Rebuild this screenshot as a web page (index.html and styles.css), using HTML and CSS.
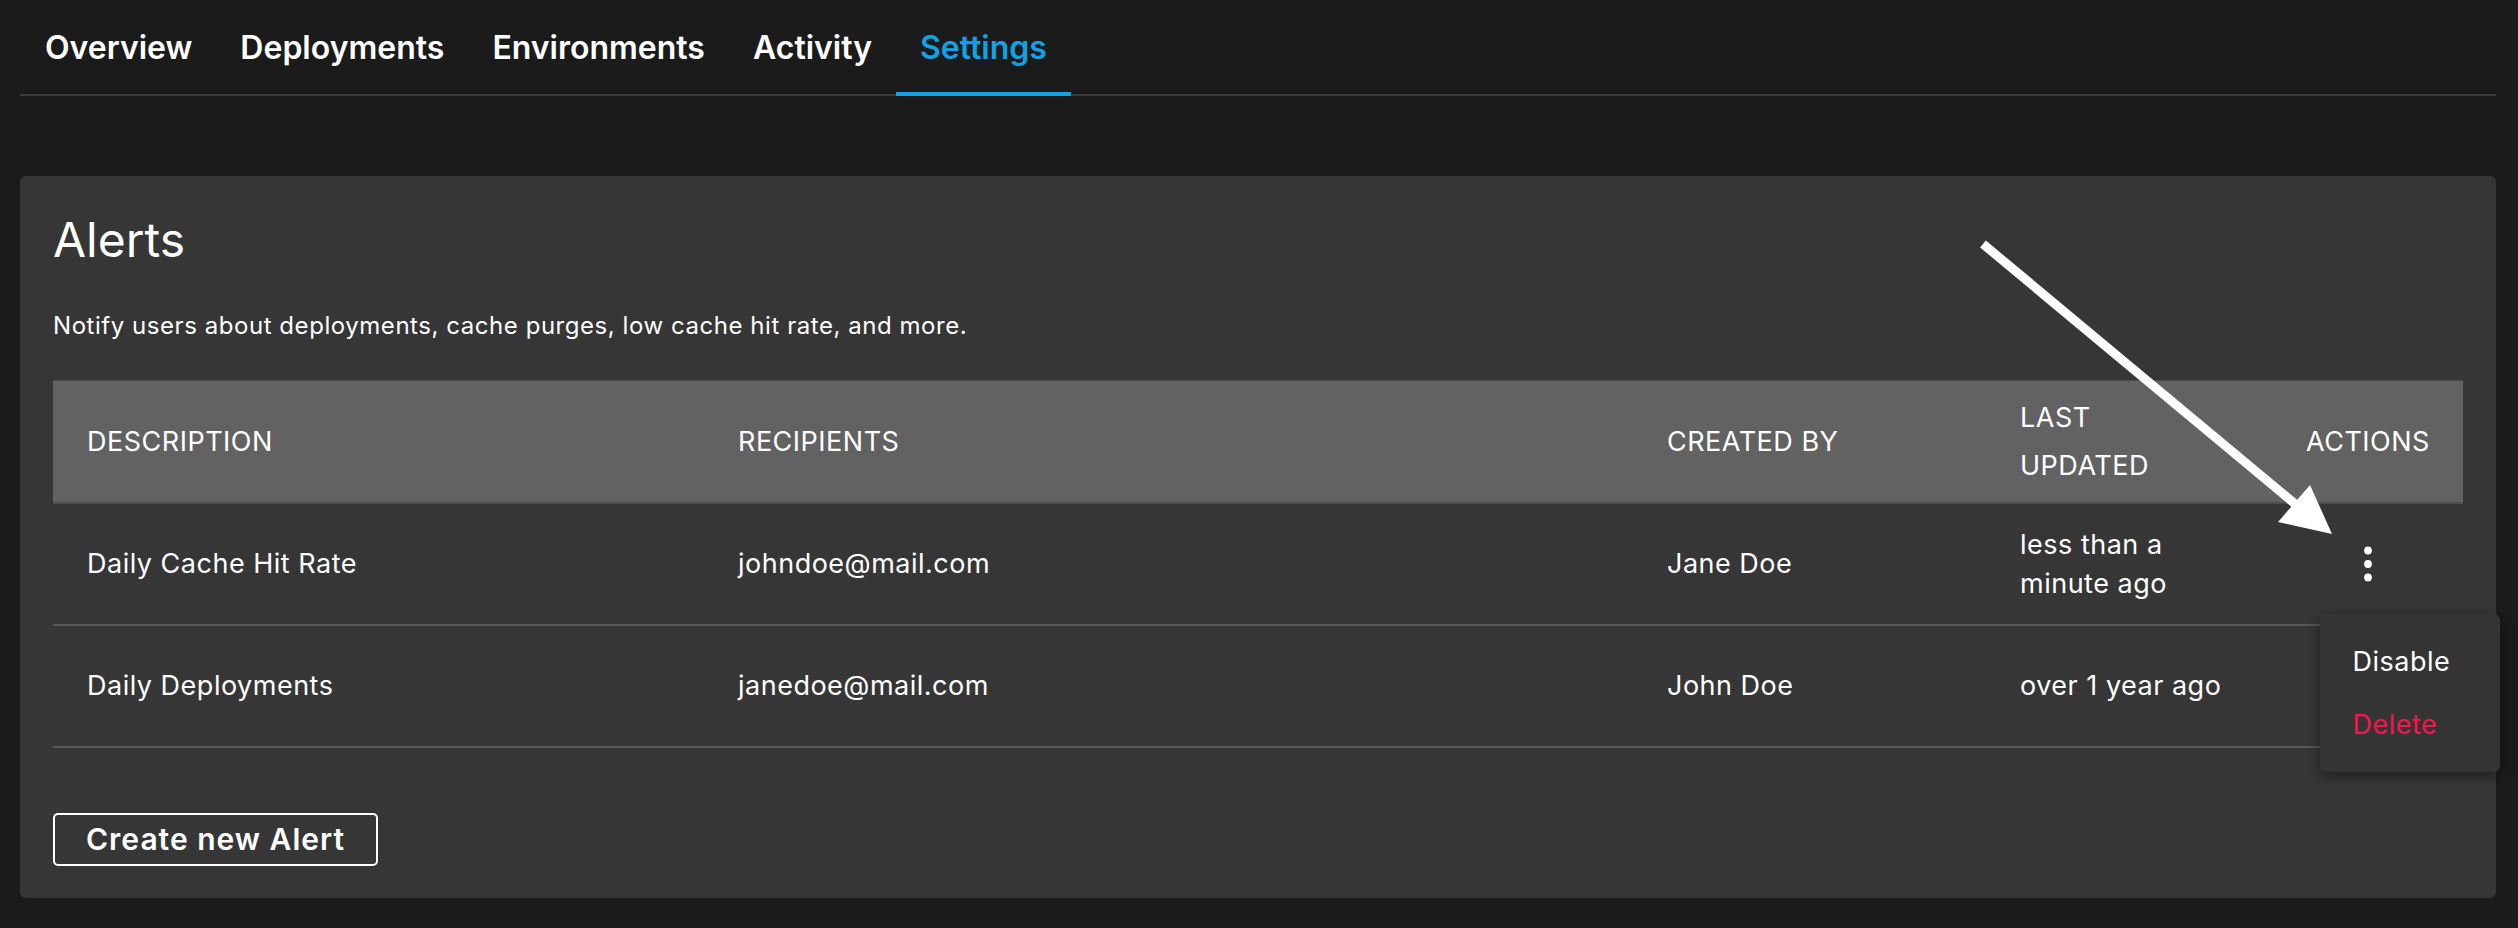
FILE: index.html
```html
<!DOCTYPE html>
<html lang="en">
<head>
<meta charset="utf-8">
<title>Settings - Alerts</title>
<link rel="stylesheet" href="styles.css">
</head>
<body>
<div class="page">
  <nav class="tabs">
    <a class="tab">Overview</a>
    <a class="tab">Deployments</a>
    <a class="tab">Environments</a>
    <a class="tab">Activity</a>
    <a class="tab active">Settings</a>
  </nav>

  <section class="card">
    <h2 class="card-title">Alerts</h2>
    <p class="card-sub">Notify users about deployments, cache purges, low cache hit rate, and more.</p>

    <table class="alerts">
      <colgroup>
        <col class="c-desc">
        <col class="c-rec">
        <col class="c-by">
        <col class="c-upd">
        <col class="c-act">
      </colgroup>
      <thead>
        <tr>
          <th>DESCRIPTION</th>
          <th>RECIPIENTS</th>
          <th>CREATED BY</th>
          <th>LAST<br>UPDATED</th>
          <th class="center">ACTIONS</th>
        </tr>
      </thead>
      <tbody>
        <tr>
          <td>Daily Cache Hit Rate</td>
          <td>johndoe@mail.com</td>
          <td>Jane Doe</td>
          <td>less than a minute ago</td>
          <td class="center">
            <span class="kebab-wrap">
              <button class="kebab" aria-label="Actions">
                <svg width="40" height="40" viewBox="0 0 40 40"><circle cx="20" cy="6.5" r="3.9" fill="#fff"/><circle cx="20" cy="20" r="3.9" fill="#fff"/><circle cx="20" cy="33.5" r="3.9" fill="#fff"/></svg>
              </button>
              <div class="menu">
                <div class="menu-item">Disable</div>
                <div class="menu-item danger">Delete</div>
              </div>
            </span>
          </td>
        </tr>
        <tr>
          <td>Daily Deployments</td>
          <td>janedoe@mail.com</td>
          <td>John Doe</td>
          <td>over 1 year ago</td>
          <td class="center">
            <button class="kebab" aria-label="Actions">
              <svg width="40" height="40" viewBox="0 0 40 40"><circle cx="20" cy="6.5" r="3.9" fill="#fff"/><circle cx="20" cy="20" r="3.9" fill="#fff"/><circle cx="20" cy="33.5" r="3.9" fill="#fff"/></svg>
            </button>
          </td>
        </tr>
      </tbody>
    </table>

    <button class="btn-outline">Create new Alert</button>
  </section>
</div>

<svg class="annot" width="2518" height="928" viewBox="0 0 2518 928">
  <line x1="1983" y1="244" x2="2300" y2="508" stroke="#fff" stroke-width="9"/>
  <polygon points="2332,534 2278,522 2310,485" fill="#fff"/>
</svg>
</body>
</html>
```

FILE: styles.css
```css
* { box-sizing: border-box; }

html, body {
  margin: 0;
  background: #1b1b1b;
  color: #fff;
  font-family: Inter, "Noto Sans", sans-serif;
}

.page {
  padding: 0 22px 0 20px;
}

.tabs {
  display: flex;
  padding-left: 1px;
  border-bottom: 2px solid #3a3a3a;
}

.tab {
  display: block;
  padding: 24px 24px 20px;
  margin-bottom: -2px;
  font-size: 32px;
  line-height: 48px;
  font-weight: 600;
  color: #fff;
  border-bottom: 4px solid transparent;
}

.tab.active {
  color: #12a1e1;
  border-bottom-color: #12a1e1;
}

.card {
  margin-top: 80px;
  background: #363636;
  border-radius: 6px;
  padding: 35px 33px 32px;
}

.card-title {
  margin: 0;
  font-size: 48px;
  line-height: 58px;
  font-weight: 400;
}

.card-sub {
  margin: 40px 0 38px;
  font-size: 24px;
  line-height: 33px;
  letter-spacing: 0.55px;
}

.alerts {
  width: 100%;
  border-collapse: collapse;
  table-layout: fixed;
}

.c-desc { width: 651px; }
.c-rec { width: 929px; }
.c-by { width: 353px; }
.c-upd { width: 286px; }
.c-act { width: 191px; }

.alerts th {
  background: #626262;
  text-align: left;
  font-weight: 400;
  font-size: 27px;
  letter-spacing: 0.5px;
  line-height: 48px;
  padding: 12.5px 34px 12px;
  vertical-align: middle;
  border-top: 1px solid #4c4c4c;
  border-bottom: 2px solid #4e4e4e;
}

.alerts td {
  font-size: 27px;
  letter-spacing: 0.5px;
  line-height: 39px;
  padding: 0 34px;
  height: 122px;
  vertical-align: middle;
  border-bottom: 2px solid #575757;
}

.alerts .center { text-align: center; }

.kebab-wrap {
  position: relative;
  display: inline-block;
  vertical-align: middle;
}

.kebab {
  display: block;
  width: 40px;
  height: 40px;
  padding: 0;
  border: 0;
  background: transparent;
}

.kebab svg { display: block; }

.menu {
  position: absolute;
  top: calc(100% + 30px);
  left: -28px;
  width: 180px;
  padding: 16px 0;
  background: #343434;
  border-radius: 6px;
  box-shadow: 0 4px 14px rgba(0, 0, 0, 0.45);
  text-align: left;
  z-index: 2;
}

.menu-item {
  padding: 12px 33px;
  font-size: 27px;
  letter-spacing: 0.5px;
  line-height: 39px;
  color: #fff;
}

.menu-item.danger { color: #f5174b; }

.btn-outline {
  display: inline-block;
  margin-top: 65px;
  padding: 0 31px;
  height: 53px;
  border: 2px solid #fff;
  border-radius: 5px;
  background: transparent;
  color: #fff;
  font-family: Inter, "Noto Sans", sans-serif;
  font-size: 30px;
  letter-spacing: 1px;
  line-height: 49px;
  font-weight: 600;
}

.annot {
  position: absolute;
  top: 0;
  left: 0;
  pointer-events: none;
}
```
